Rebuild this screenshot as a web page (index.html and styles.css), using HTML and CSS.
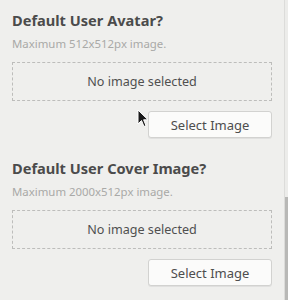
FILE: index.html
```html
<!DOCTYPE html>
<html lang="en">
  <head>
    <meta charset="UTF-8" />
    <title>Settings</title>
    <link rel="stylesheet" href="styles.css">
  </head>
  <body>
    <div class="page">
      <div class="panel">
        <div class="field">
          <div class="label">Default User Avatar?</div>
          <div class="hint">Maximum 512x512px image.</div>
          <div class="drop">No image selected</div>
          <div class="actions">
            <button>Select Image</button>
          </div>
        </div>

        <div class="field">
          <div class="label">Default User Cover Image?</div>
          <div class="hint">Maximum 2000x512px image.</div>
          <div class="drop">No image selected</div>
          <div class="actions">
            <button>Select Image</button>
          </div>
        </div>
      </div>
      <div class="scrollbar">
        <div class="thumb"></div>
      </div>
    </div>

    <svg class="cursor" width="12" height="19" viewBox="0 0 12 19">
      <path d="M1 1 L1 15 L4.5 11.5 L7 17.5 L9 16.6 L6.6 10.8 L11 10.8 Z" fill="#1a1a1a" stroke="#fff" stroke-width="1" />
    </svg>
  </body>
</html>
```

FILE: styles.css
```css
body {
  margin: 0;
  padding: 0;
  width: 288px;
  height: 300px;
  overflow: hidden;
  position: relative;
  background: #efefed;
  font-family: "Noto Sans", "DejaVu Sans", sans-serif;
}

.page {
  display: flex;
  height: 300px;
}

.panel {
  flex: 1;
  padding: 11px 12px 0 12px;
}

.scrollbar {
  width: 3px;
  border-left: 1px solid #dcdcda;
  background: #ececea;
  display: flex;
  flex-direction: column;
  justify-content: flex-end;
}
.thumb {
  height: 103px;
  background: #b8b8b6;
}

.field {
  margin-bottom: 21px;
}

.label {
  font-size: 14.6px;
  line-height: 18px;
  font-weight: bold;
  color: #4b4b4b;
}

.hint {
  margin-top: 7px;
  font-size: 11.4px;
  line-height: 16px;
  color: #a9a9a7;
}

.drop {
  margin-top: 10px;
  width: 258px;
  height: 37px;
  border: 1px dashed #bdbdbb;
  display: flex;
  justify-content: center;
  align-items: center;
  font-size: 12.6px;
  color: #505050;
}

.actions {
  margin-top: 10px;
  width: 260px;
  display: flex;
  justify-content: flex-end;
}
.actions > button {
  box-sizing: border-box;
  width: 124px;
  height: 27px;
  border: 1px solid #d2d2d0;
  border-radius: 3px;
  background: #fbfbfa;
  box-shadow: 0 1px 0 rgba(0, 0, 0, 0.06);
  font-family: inherit;
  font-size: 13px;
  color: #4e4e4e;
  padding: 0;
}

.cursor {
  position: absolute;
  left: 137px;
  top: 109px;
}
```
